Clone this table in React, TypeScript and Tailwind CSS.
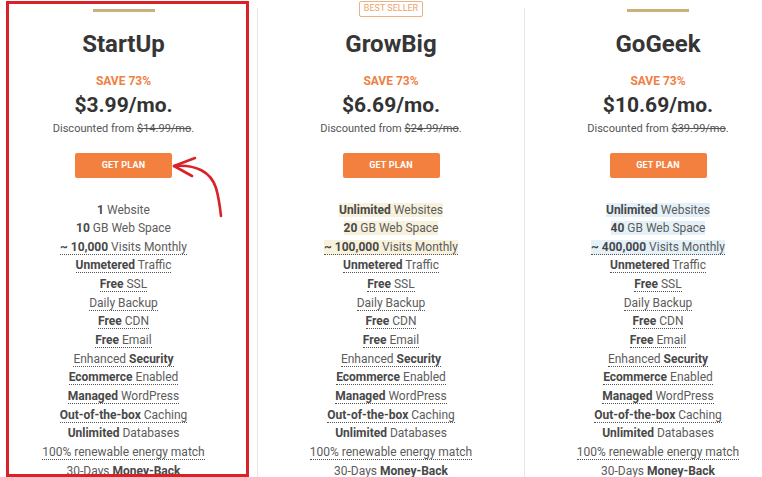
import React from "react";

type Feature = {
  parts: { t: string; b?: boolean }[];
  dotted?: boolean;
  hl?: boolean;
};

type Plan = {
  name: string;
  price: string;
  was: string;
  badge?: boolean;
  hlClass: string;
  features: Feature[];
};

const common: Feature[] = [
  { parts: [{ t: "Unmetered", b: true }, { t: " Traffic" }], dotted: true },
  { parts: [{ t: "Free", b: true }, { t: " SSL" }], dotted: true },
  { parts: [{ t: "Daily Backup" }], dotted: true },
  { parts: [{ t: "Free", b: true }, { t: " CDN" }], dotted: true },
  { parts: [{ t: "Free", b: true }, { t: " Email" }], dotted: true },
  { parts: [{ t: "Enhanced " }, { t: "Security", b: true }], dotted: true },
  { parts: [{ t: "Ecommerce", b: true }, { t: " Enabled" }], dotted: true },
  { parts: [{ t: "Managed", b: true }, { t: " WordPress" }], dotted: true },
  { parts: [{ t: "Out-of-the-box", b: true }, { t: " Caching" }], dotted: true },
  { parts: [{ t: "Unlimited", b: true }, { t: " Databases" }] },
  { parts: [{ t: "100% renewable energy match" }], dotted: true },
  { parts: [{ t: "30-Days " }, { t: "Money-Back", b: true }] },
];

const plans: Plan[] = [
  {
    name: "StartUp",
    price: "$3.99/mo.",
    was: "$14.99/mo",
    hlClass: "",
    features: [
      { parts: [{ t: "1", b: true }, { t: " Website" }] },
      { parts: [{ t: "10", b: true }, { t: " GB Web Space" }] },
      { parts: [{ t: "~ 10,000", b: true }, { t: " Visits Monthly" }], dotted: true },
      ...common,
    ],
  },
  {
    name: "GrowBig",
    price: "$6.69/mo.",
    was: "$24.99/mo",
    badge: true,
    hlClass: "bg-[#f8f1dc]",
    features: [
      { parts: [{ t: "Unlimited", b: true }, { t: " Websites" }], hl: true },
      { parts: [{ t: "20", b: true }, { t: " GB Web Space" }], hl: true },
      { parts: [{ t: "~ 100,000", b: true }, { t: " Visits Monthly" }], dotted: true, hl: true },
      ...common,
    ],
  },
  {
    name: "GoGeek",
    price: "$10.69/mo.",
    was: "$39.99/mo",
    hlClass: "bg-[#e4f1f8]",
    features: [
      { parts: [{ t: "Unlimited", b: true }, { t: " Websites" }], hl: true },
      { parts: [{ t: "40", b: true }, { t: " GB Web Space" }], hl: true },
      { parts: [{ t: "~ 400,000", b: true }, { t: " Visits Monthly" }], dotted: true, hl: true },
      ...common,
    ],
  },
];

function PlanColumn({ plan, first }: { plan: Plan; first?: boolean }) {
  return (
    <div
      className={`relative w-[267px] shrink-0 mt-[8px] flex flex-col items-center ${
        first ? "" : "border-l border-[#e6e6e6]"
      }`}
    >
      {plan.badge && (
        <div className="absolute -top-[7px] left-1/2 -translate-x-1/2 h-[16px] w-[64px] border border-[#eab385] rounded-[2px] flex items-center justify-center text-[9px] text-[#eea26c] bg-white">
          BEST SELLER
        </div>
      )}
      <div className={`mt-[1px] h-[3px] w-[62px] ${plan.badge ? "" : "bg-[#cbb07c]"}`} />
      <h3 className="mt-[18px] text-[24px] leading-[28px] font-bold text-[#363636]">
        {plan.name}
      </h3>
      <div className="mt-[16px] text-[12px] leading-[14px] font-bold text-[#ef7f44]">
        SAVE 73%
      </div>
      <div className="mt-[5px] text-[21px] leading-[24px] font-bold text-[#333]">
        {plan.price}
      </div>
      <div className="mt-[4.5px] text-[11px] leading-[13px] text-[#555]">
        Discounted from <span className="line-through">{plan.was}</span>.
      </div>
      <button className="mt-[18.5px] h-[25px] w-[97px] rounded-[2px] bg-[#f3803e] text-white text-[9px] font-bold tracking-[0.2px]">
        GET PLAN
      </button>
      <ul className="mt-[22.5px] flex flex-col items-center">
        {plan.features.map((f, i) => (
          <li key={i} className="leading-[18.65px] text-[12px] text-[#5c5c5c]">
            <span
              className={`${f.dotted ? "border-b border-dotted border-[#555]" : ""} ${
                f.hl ? plan.hlClass : ""
              }`}
            >
              {f.parts.map((p, j) =>
                p.b ? (
                  <b key={j} className="font-bold text-[#484848]">
                    {p.t}
                  </b>
                ) : (
                  <span key={j}>{p.t}</span>
                )
              )}
            </span>
          </li>
        ))}
      </ul>
    </div>
  );
}

export default function App() {
  return (
    <div
      className="relative w-[762px] h-[477px] overflow-hidden bg-white"
      style={{ fontFamily: "Roboto, 'Liberation Sans', sans-serif" }}
    >
      <div className="flex -ml-[10px]">
        {plans.map((p, i) => (
          <PlanColumn key={p.name} plan={p} first={i === 0} />
        ))}
      </div>

      {/* annotation */}
      <div className="absolute left-[6px] top-[1px] w-[243px] h-[476px] border-[3px] border-[#dc2028] pointer-events-none" />
      <svg
        className="absolute left-0 top-0 pointer-events-none"
        width="762"
        height="477"
        viewBox="0 0 762 477"
        fill="none"
      >
        <path
          d="M174 166 C 196 164, 211 172, 216 188 C 219 198, 220 207, 221 216"
          stroke="#d9232a"
          strokeWidth="2.6"
          strokeLinecap="round"
        />
        <path
          d="M195 158 L 174 166 L 192 176"
          stroke="#d9232a"
          strokeWidth="2.6"
          strokeLinecap="round"
          strokeLinejoin="round"
        />
      </svg>
    </div>
  );
}
